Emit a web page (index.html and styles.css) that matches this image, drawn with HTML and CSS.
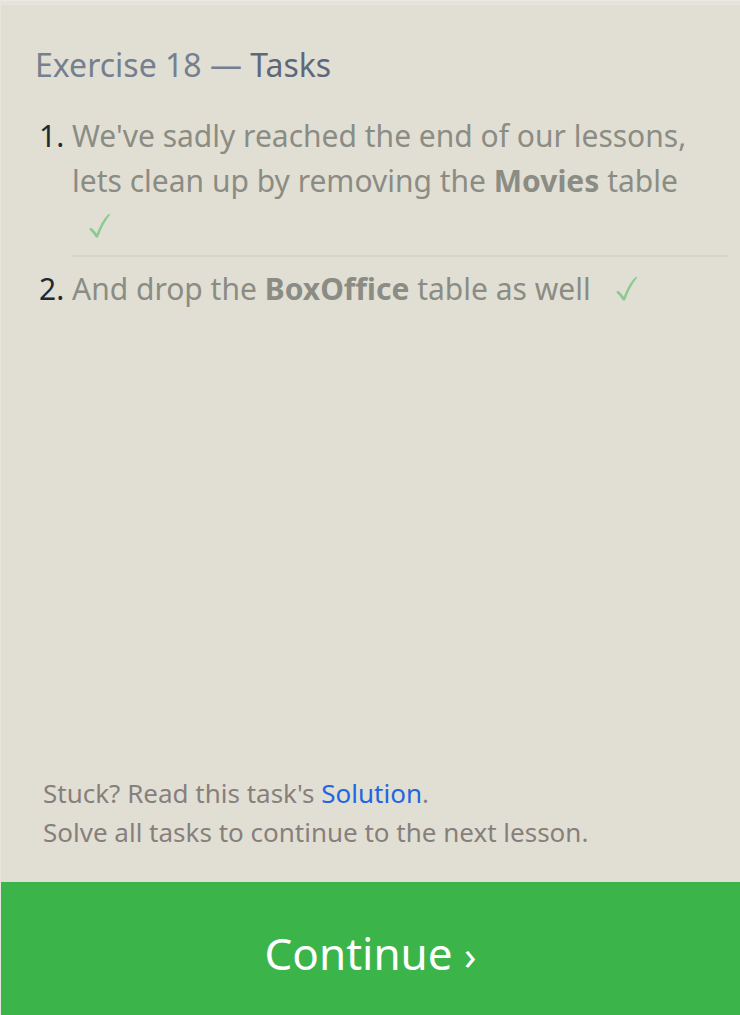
FILE: index.html
```html
<!DOCTYPE html>
<html lang="en">
<head>
<meta charset="utf-8">
<title>Exercise 18 — Tasks</title>
<link rel="stylesheet" href="styles.css">
</head>
<body>
<main class="panel">
  <h1 class="title">Exercise 18 — <span class="title-strong">Tasks</span></h1>
  <ol class="tasks">
    <li class="task"><span class="done">We've sadly reached the end of our lessons, lets clean up by removing the <strong>Movies</strong> table</span> <svg class="check" viewBox="0 0 24 28" role="img" aria-label="Done"><path d="M1.300 17.200 Q2.500 15.200 4 16.300 Q6.500 18.700 8.700 21.700 Q13.500 9 20.200 2.200 Q21.500 1.500 22.300 2.600 Q15 11.500 10.300 24.700 Q9.300 26.600 7.500 25 Q4.500 20.300 1.300 17.200Z"/></svg></li>
    <li class="task"><span class="done">And drop the <strong>BoxOffice</strong> table as well</span> <svg class="check" viewBox="0 0 24 28" role="img" aria-label="Done"><path d="M1.300 17.200 Q2.500 15.200 4 16.300 Q6.500 18.700 8.700 21.700 Q13.500 9 20.200 2.200 Q21.500 1.500 22.300 2.600 Q15 11.500 10.300 24.700 Q9.300 26.600 7.500 25 Q4.500 20.300 1.300 17.200Z"/></svg></li>
  </ol>
  <p class="help">Stuck? Read this task's <a class="link" href="#solution">Solution</a>.<br>Solve all tasks to continue to the next lesson.</p>
  <button class="continue" type="button">Continue <span class="chevron">›</span></button>
</main>
</body>
</html>
```
FILE: styles.css
```css
* { box-sizing: border-box; }
body {
  margin: 0;
  background: #e1dfd4;
  font-family: "Noto Sans", "Open Sans", sans-serif;
}
.panel {
  display: flex;
  flex-direction: column;
  min-height: 100vh;
  border-top: 1px solid #ecebe3;
  border-left: 1px solid #e7e5dc;
  box-shadow: inset 0 4px #e4e4db;
}
.title {
  margin: 0;
  padding: 41px 34px 0;
  font-size: 32px;
  line-height: 46px;
  font-weight: 400;
  color: #75808f;
}
.title-strong { color: #5f687b; }
.tasks {
  margin: 0;
  padding: 25px 12px 0 71px;
  font-size: 30px;
  line-height: 45px;
  color: #25282e;
}
.task + .task {
  margin-top: 7px;
  padding-top: 9px;
  border-top: 2px solid #d8d6cb;
}
.done { color: #8b8c84; }
.check {
  width: 24px;
  height: 28px;
  margin: 0 16px;
  vertical-align: -3px;
  fill: #8acb90;
}
.help {
  margin: auto 0 0;
  padding: 0 42px 30px;
  font-size: 26px;
  line-height: 39px;
  color: #877f7c;
}
.link { color: #1f66e0; text-decoration: none; }
.continue {
  height: 133px;
  padding: 8px 0 0;
  border: 0;
  background: #3bb54a;
  color: #fff;
  font: inherit;
  font-size: 44px;
}
.chevron { font-size: 40px; }
```
